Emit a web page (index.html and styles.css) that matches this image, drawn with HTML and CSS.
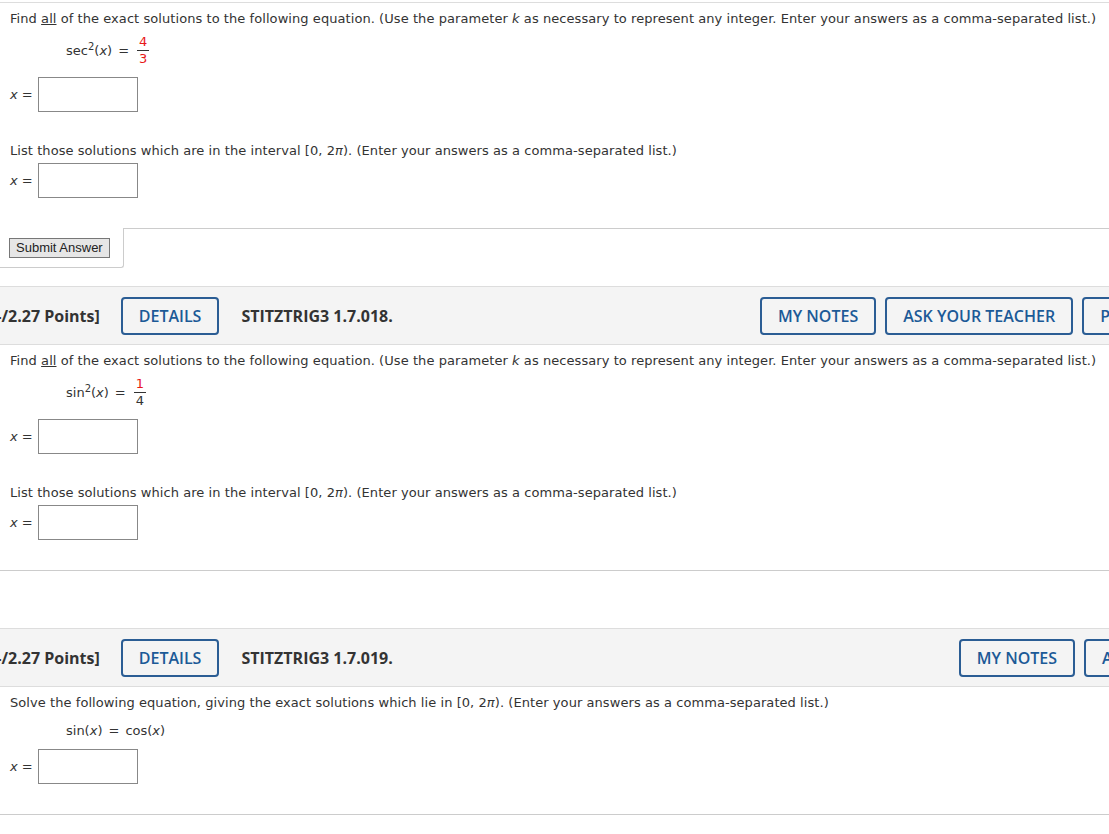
FILE: index.html
```html
<!DOCTYPE html>
<html lang="en">
<head>
  <meta charset="UTF-8" />
  <title>Trig Equations</title>
  <link rel="stylesheet" href="styles.css">
</head>
<body>
  <div class="page">
    <div class="top-rule"></div>

    <!-- question: sec^2 -->
    <section class="question">
      <p class="prompt">Find <u>all</u> of the exact solutions to the following equation. (Use the parameter <i>k</i> as necessary to represent any integer. Enter your answers as a comma-separated list.)</p>
      <div class="equation">
        <span>sec<sup>2</sup>(<i>x</i>)</span>
        <span class="eq">=</span>
        <span class="frac"><span class="num">4</span><span class="den">3</span></span>
      </div>
      <div class="answer"><span class="lbl"><i>x</i> =</span><input type="text" class="box" /></div>
      <p class="prompt sub">List those solutions which are in the interval [0, 2<i>π</i>). (Enter your answers as a comma-separated list.)</p>
      <div class="answer after-sub"><span class="lbl"><i>x</i> =</span><input type="text" class="box" /></div>
    </section>
    <div class="submit-row">
      <div class="submit-tab"><button class="submit-btn">Submit Answer</button></div>
      <div class="submit-rest"></div>
    </div>

    <div class="q-header first">
      <span class="points">[-/2.27 Points]</span>
      <button class="hbtn">DETAILS</button>
      <span class="q-title">STITZTRIG3 1.7.018.</span>
      <div class="hbtns">
        <button class="hbtn">MY NOTES</button>
        <button class="hbtn">ASK YOUR TEACHER</button>
        <button class="hbtn">PRACTICE ANOTHER</button>
      </div>
    </div>

    <!-- question: sin^2 -->
    <section class="question">
      <p class="prompt">Find <u>all</u> of the exact solutions to the following equation. (Use the parameter <i>k</i> as necessary to represent any integer. Enter your answers as a comma-separated list.)</p>
      <div class="equation">
        <span>sin<sup>2</sup>(<i>x</i>)</span>
        <span class="eq">=</span>
        <span class="frac"><span class="num">1</span><span class="den black">4</span></span>
      </div>
      <div class="answer"><span class="lbl"><i>x</i> =</span><input type="text" class="box" /></div>
      <p class="prompt sub">List those solutions which are in the interval [0, 2<i>π</i>). (Enter your answers as a comma-separated list.)</p>
      <div class="answer after-sub"><span class="lbl"><i>x</i> =</span><input type="text" class="box" /></div>
    </section>
    <div class="rule"></div>

    <div class="q-header second">
      <span class="points">[-/2.27 Points]</span>
      <button class="hbtn">DETAILS</button>
      <span class="q-title">STITZTRIG3 1.7.019.</span>
      <div class="hbtns">
        <button class="hbtn">MY NOTES</button>
        <button class="hbtn">ASK YOUR TEACHER</button>
      </div>
    </div>

    <!-- question: sin = cos -->
    <section class="question">
      <p class="prompt">Solve the following equation, giving the exact solutions which lie in [0, 2<i>π</i>). (Enter your answers as a comma-separated list.)</p>
      <div class="equation plain">
        <span>sin(<i>x</i>)</span>
        <span class="eq">=</span>
        <span>cos(<i>x</i>)</span>
      </div>
      <div class="answer short"><span class="lbl"><i>x</i> =</span><input type="text" class="box" /></div>
    </section>
    <div class="rule"></div>
  </div>
</body>
</html>
```

FILE: styles.css
```css
body {
  margin: 0;
  overflow: hidden;
  background: #fff;
  font-family: "DejaVu Sans", Verdana, sans-serif;
  font-size: 13px;
  color: #333;
}
.page {
  width: 1290px;
}
.top-rule {
  margin-top: 2px;
  border-top: 1px solid #ddd;
}
.question {
  padding: 0 10px;
}
.prompt {
  margin: 8px 0 0;
  line-height: 16px;
  letter-spacing: 0.065px;
  white-space: nowrap;
}
.prompt.sub {
  margin-top: 31px;
}
.equation {
  display: flex;
  align-items: center;
  gap: 6px;
  margin: 7px 0 0 56px;
  height: 32px;
}
.equation sup {
  font-size: 10px;
  line-height: 0;
}
.equation.plain {
  margin-top: 8px;
  height: 22px;
}
.frac {
  display: inline-flex;
  flex-direction: column;
  align-items: center;
  font-size: 13px;
  line-height: 14px;
  margin-left: 2px;
}
.num {
  color: #e81818;
  border-bottom: 1px solid #333;
  padding: 0 2px 1px;
}
.den {
  color: #e81818;
  padding-top: 1px;
}
.den.black {
  color: #333;
}
.answer {
  display: flex;
  align-items: center;
  margin-top: 11px;
}
.answer.after-sub {
  margin-top: 4px;
}
.answer.short {
  margin-top: 8px;
}
.lbl {
  width: 28px;
}
.box {
  width: 100px;
  height: 35px;
  box-sizing: border-box;
  border: 1px solid #888;
  margin: 0;
}
.submit-row {
  display: flex;
  margin-top: 30px;
}
.submit-tab {
  width: 124px;
  height: 40px;
  border-right: 1px solid #ccc;
  border-bottom: 1px solid #ccc;
  border-bottom-right-radius: 3px;
  display: flex;
  align-items: center;
  padding-left: 9px;
  box-sizing: border-box;
}
.submit-btn {
  font-family: "Liberation Sans", Arial, sans-serif;
  font-size: 13px;
  color: #222;
  background: #e6e6e6;
  border: 1px solid #777;
  padding: 1px 6px;
  height: 20px;
}
.submit-rest {
  flex: 1;
  border-top: 1px solid #ccc;
}
.q-header {
  display: flex;
  align-items: center;
  height: 57px;
  background: #f4f4f4;
  border-top: 1px solid #ddd;
  border-bottom: 1px solid #ddd;
  font-family: "Open Sans", sans-serif;
  font-size: 16px;
  font-weight: bold;
  color: #333;
  padding-right: 18px;
}
.q-header.first {
  margin-top: 18px;
}
.q-header.second {
  margin-top: 57px;
}
.points {
  margin-left: -9px;
  margin-right: 21px;
}
.q-title {
  margin-left: 22px;
}
.hbtns {
  margin-left: auto;
  display: flex;
  gap: 9px;
}
.hbtn {
  font-family: "Open Sans", sans-serif;
  font-size: 16px;
  font-weight: 600;
  color: #1c5a97;
  background: #f4f4f4;
  border: 2px solid #2b5d94;
  border-radius: 4px;
  height: 38px;
  padding: 0 16px;
}
.rule {
  margin-top: 30px;
  border-top: 1px solid #ccc;
}
```
